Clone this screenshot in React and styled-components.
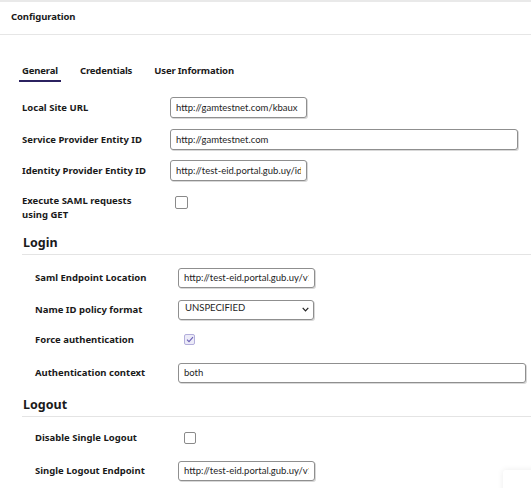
import React from "react";
import styled, { createGlobalStyle } from "styled-components";

const Global = createGlobalStyle`
  html, body { margin: 0; padding: 0; background: #fff; }
  body { font-family: "Noto Sans", "Open Sans", sans-serif; color: #1a1a1a; }
  * { box-sizing: border-box; }
`;

const Page = styled.div`
  position: relative;
  width: 531px;
  height: 488px;
  overflow: hidden;
  background: #fff;
`;

const Header = styled.header`
  height: 35px;
  border-top: 2px solid #e9e9e9;
  border-bottom: 1px solid #e6e6e6;
  display: flex;
  align-items: center;
  padding: 0 0 3px 11px;
`;

const Title = styled.h1`
  margin: 0;
  font-size: 9.5px;
  font-weight: 700;
  letter-spacing: -0.1px;
`;

const Body = styled.div`
  padding: 29px 0 0 19px;
`;

const Tabs = styled.nav`
  display: flex;
  gap: 16px;
`;

const Tab = styled.div`
  padding: 0 3px 2px;
  font-size: 9.5px;
  line-height: 14px;
  font-weight: 700;
  letter-spacing: -0.15px;
  border-bottom: 2px solid ${(p) => (p.$active ? "#2b2160" : "transparent")};
`;

const Form = styled.div`
  padding-top: 15px;
  padding-left: 3px;
  display: flex;
  flex-direction: column;
`;

const Row = styled.div`
  display: flex;
  align-items: ${(p) => (p.$top ? "flex-start" : "center")};
  margin-top: ${(p) => p.$mt || 0}px;
  min-height: 21px;
`;

const Label = styled.label`
  flex: 0 0 ${(p) => p.$w || 148}px;
  font-size: 9.5px;
  font-weight: 700;
  line-height: 14px;
  span { display: block; max-width: 125px; }
`;

const TextInput = styled.input`
  width: ${(p) => (p.$wide ? 348 : 137)}px;
  height: ${(p) => p.$h || 21}px;
  border: 1px solid #8f8f8f;
  border-radius: 3px;
  box-shadow: 1px 1px 0 #d8d8d8;
  padding: 0 5px;
  font-family: Lato, "Noto Sans", sans-serif;
  font-size: 9.5px;
  color: #1e1e1e;
  background: #fff;
  outline: none;
`;

const SelectWrap = styled.div`
  position: relative;
  width: 136px;
  height: 20px;
`;

const Select = styled.select`
  appearance: none;
  display: block;
  width: 100%;
  height: 100%;
  border: 1px solid #8f8f8f;
  border-radius: 3px;
  box-shadow: 1px 1px 0 #d8d8d8;
  padding: 0 6px 4px;
  font-family: Lato, "Noto Sans", sans-serif;
  font-size: 9.5px;
  color: #1e1e1e;
  background: #fff;
`;

const Chevron = styled.svg`
  position: absolute;
  right: 5px;
  top: 7px;
  width: 7px;
  height: 5px;
  pointer-events: none;
`;

const Check = styled.span`
  display: inline-flex;
  align-items: center;
  justify-content: center;
  width: ${(p) => p.$s || 12}px;
  height: ${(p) => p.$s || 12}px;
  margin-left: ${(p) => p.$ml || 5}px;
  margin-top: ${(p) => p.$mt || 0}px;
  border: 1px solid ${(p) => (p.$checked ? "#b3aedb" : "#8a8a8a")};
  border-radius: 2px;
  background: ${(p) => (p.$checked ? "#ecebf8" : "#fff")};
`;

const Section = styled.section`
  margin-top: ${(p) => p.$mt}px;
`;

const SectionTitle = styled.h2`
  margin: 0;
  padding: 0 0 3px 1px;
  font-size: 12.5px;
  line-height: 17px;
  font-weight: 700;
  border-bottom: 1px solid #e4e4e4;
`;

const SectionBody = styled.div`
  padding: 0 0 0 13px;
  display: flex;
  flex-direction: column;
`;

const Toast = styled.div`
  position: absolute;
  left: 503px;
  top: 470px;
  width: 60px;
  height: 40px;
  border-radius: 3px;
  box-shadow: 0 0 6px rgba(0, 0, 0, 0.08);
  background: #fff;
`;

const CheckMark = () => (
  <svg width="8" height="7" viewBox="0 0 8 7">
    <path d="M1 3.6 L3 5.6 L7 1.2" fill="none" stroke="#6a5fb5" strokeWidth="1.1" />
  </svg>
);

export default function App() {
  return (
    <Page>
      <Global />
      <Header>
        <Title>Configuration</Title>
      </Header>
      <Body>
        <Tabs>
          <Tab $active>General</Tab>
          <Tab>Credentials</Tab>
          <Tab>User Information</Tab>
        </Tabs>
        <Form>
          <Row>
            <Label>Local Site URL</Label>
            <TextInput readOnly value="http://gamtestnet.com/kbaux" />
          </Row>
          <Row $mt={11}>
            <Label>Service Provider Entity ID</Label>
            <TextInput $wide readOnly value="http://gamtestnet.com" />
          </Row>
          <Row $mt={10}>
            <Label>Identity Provider Entity ID</Label>
            <TextInput readOnly value="http://test-eid.portal.gub.uy/idp" />
          </Row>
          <Row $mt={13} $top>
            <Label><span>Execute SAML requests using GET</span></Label>
            <Check $ml={5} $mt={2} $s={13} />
          </Row>

          <Section $mt={12}>
            <SectionTitle>Login</SectionTitle>
            <SectionBody>
              <Row $mt={12}>
                <Label $w={143}>Saml Endpoint Location</Label>
                <TextInput $h={20} readOnly value="http://test-eid.portal.gub.uy/v1.1/idp/saml/sso" />
              </Row>
              <Row $mt={11}>
                <Label $w={143}>Name ID policy format</Label>
                <SelectWrap>
                  <Select defaultValue="UNSPECIFIED">
                    <option>UNSPECIFIED</option>
                  </Select>
                  <Chevron viewBox="0 0 7 5">
                    <path d="M0.7 0.8 L3.5 3.8 L6.3 0.8" fill="none" stroke="#222" strokeWidth="1.2" />
                  </Chevron>
                </SelectWrap>
              </Row>
              <Row $mt={9}>
                <Label $w={143}>Force authentication</Label>
                <Check $checked $ml={6} $s={11}><CheckMark /></Check>
              </Row>
              <Row $mt={12}>
                <Label $w={143}>Authentication context</Label>
                <TextInput $wide $h={20} readOnly value="both" />
              </Row>
            </SectionBody>
          </Section>

          <Section $mt={13}>
            <SectionTitle>Logout</SectionTitle>
            <SectionBody>
              <Row $mt={10}>
                <Label $w={143}>Disable Single Logout</Label>
                <Check $ml={6} $s={12} />
              </Row>
              <Row $mt={12}>
                <Label $w={143}>Single Logout Endpoint</Label>
                <TextInput $h={20} readOnly value="http://test-eid.portal.gub.uy/v1.1/idp/saml/slo" />
              </Row>
            </SectionBody>
          </Section>
        </Form>
      </Body>
      <Toast />
    </Page>
  );
}
